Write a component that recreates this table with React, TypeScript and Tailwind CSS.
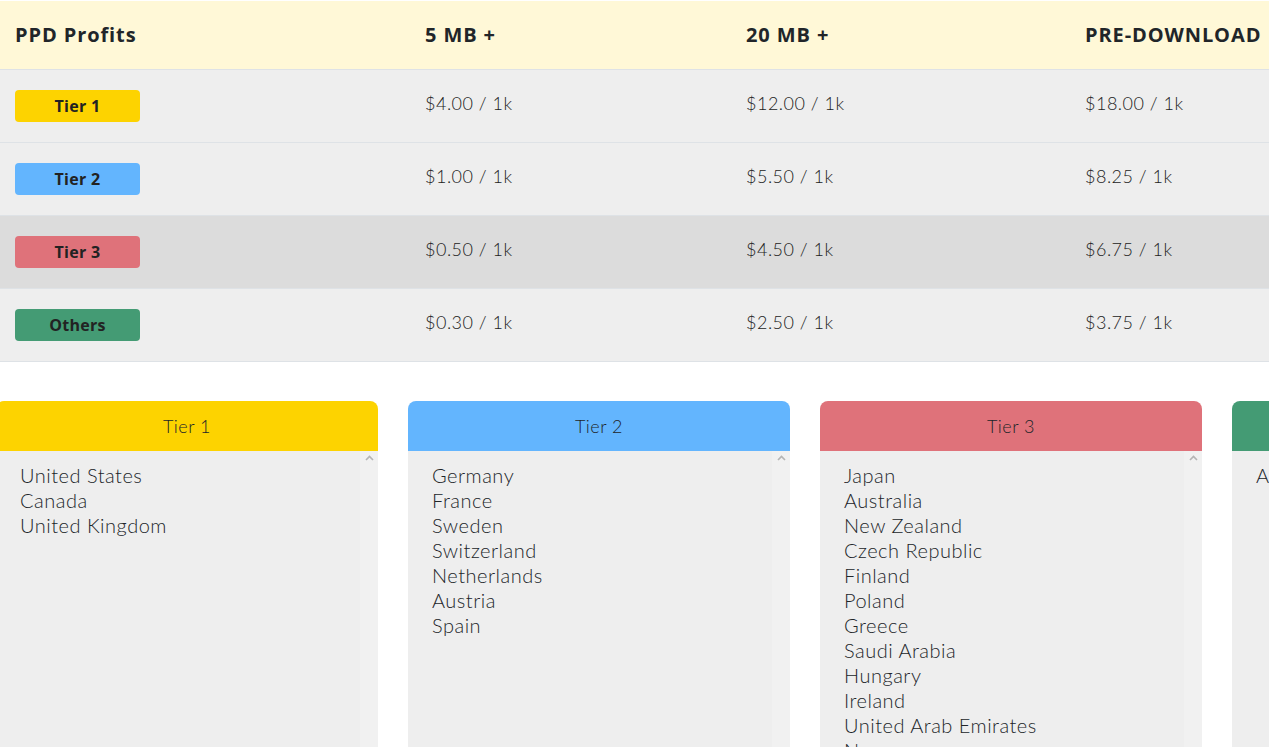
import React from "react";

type Tier = {
  name: string;
  color: string;
  rates: [string, string, string];
  countries: string[];
  hover?: boolean;
};

const tiers: Tier[] = [
  {
    name: "Tier 1",
    color: "bg-[#fdd300]",
    rates: ["$4.00 / 1k", "$12.00 / 1k", "$18.00 / 1k"],
    countries: ["United States", "Canada", "United Kingdom"],
  },
  {
    name: "Tier 2",
    color: "bg-[#63b5fe]",
    rates: ["$1.00 / 1k", "$5.50 / 1k", "$8.25 / 1k"],
    countries: ["Germany", "France", "Sweden", "Switzerland", "Netherlands", "Austria", "Spain"],
  },
  {
    name: "Tier 3",
    color: "bg-[#df727a]",
    rates: ["$0.50 / 1k", "$4.50 / 1k", "$6.75 / 1k"],
    countries: [
      "Japan",
      "Australia",
      "New Zealand",
      "Czech Republic",
      "Finland",
      "Poland",
      "Greece",
      "Saudi Arabia",
      "Hungary",
      "Ireland",
      "United Arab Emirates",
      "Norway",
    ],
    hover: true,
  },
  {
    name: "Others",
    color: "bg-[#449b74]",
    rates: ["$0.30 / 1k", "$2.50 / 1k", "$3.75 / 1k"],
    countries: ["All other countries"],
  },
];

const cols = "grid grid-cols-[410px_321px_339px_1fr]";
const boldFont = "font-['Open_Sans',sans-serif] font-bold";
const lightFont = "font-['Lato',sans-serif] font-light tracking-[0.5px]";

function ScrollTrack() {
  return (
    <div className="flex w-[18px] shrink-0 justify-center bg-[#f1f1f1] pt-[4px]">
      <svg width="9" height="6" viewBox="0 0 9 6" aria-hidden="true">
        <path d="M1 5 L4.5 1.5 L8 5" fill="none" stroke="#b4b4b4" strokeWidth="1.6" />
      </svg>
    </div>
  );
}

function TierCard({ tier, last }: { tier: Tier; last?: boolean }) {
  return (
    <div className="flex w-[382px] shrink-0 flex-col">
      <div
        className={`flex h-[50px] items-center justify-center rounded-t-[8px] text-[18px] text-[#212529] ${lightFont} ${tier.color}`}
      >
        {tier.name}
      </div>
      <div className="flex h-[300px] overflow-hidden bg-[#eeeeee]">
        <ul className={`flex-1 pl-[24px] pt-[12px] text-[20px] leading-[25px] text-[#212529] ${lightFont}`}>
          {tier.countries.map((c) => (
            <li key={c}>{c}</li>
          ))}
        </ul>
        {!last && <ScrollTrack />}
      </div>
    </div>
  );
}

export default function App() {
  return (
    <div className="h-[747px] w-[1269px] overflow-hidden bg-white text-[#212529]">
      <div className="w-[1320px]">
        {/* Rates table */}
        <div
          className={`${cols} h-[70px] items-center border-t border-b border-t-white border-b-[#dee2e6] bg-[#fff8d7] text-[20px] tracking-[0.9px] ${boldFont}`}
        >
          <div className="pl-[15px]">PPD Profits</div>
          <div className="pl-[15px]">5 MB +</div>
          <div className="pl-[15px]">20 MB +</div>
          <div className="pl-[15px]">PRE-DOWNLOAD</div>
        </div>
        {tiers.map((t) => (
          <div
            key={t.name}
            className={`${cols} h-[73px] items-center border-b border-[#dee2e6] ${t.hover ? "bg-[#dcdcdc]" : "bg-[#eeeeee]"}`}
          >
            <div className="pl-[15px]">
              <span
                className={`flex h-[32px] w-[125px] items-center justify-center rounded-[4px] text-[16px] tracking-[0.3px] text-[#222] ${boldFont} ${t.color}`}
              >
                {t.name}
              </span>
            </div>
            {t.rates.map((r) => (
              <div key={r} className={`-mt-[6px] pl-[15px] text-[18px] text-[#222] ${lightFont}`}>
                {r}
              </div>
            ))}
          </div>
        ))}

        {/* Country lists */}
        <div className="ml-[-4px] mt-[39px] flex gap-[30px]">
          {tiers.map((t, i) => (
            <TierCard key={t.name} tier={t} last={i === 3} />
          ))}
        </div>
      </div>
    </div>
  );
}
